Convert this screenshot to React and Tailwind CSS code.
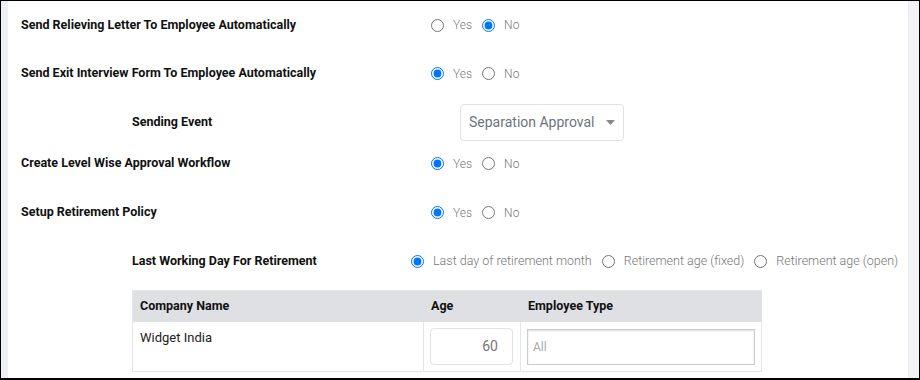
import React from 'react';

const font = { fontFamily: 'Roboto, "Liberation Sans", sans-serif' };

const Radio = ({ checked, label, className = '', size = 'text-[12px]' }) => (
    <label className={`flex items-center ${className}`}>
        <input type="radio" checked={checked} readOnly className="m-0 w-[13px] h-[13px] accent-[#0075ff]" />
        <span className={`ml-[9px] ${size} font-light text-[#777]`}>{label}</span>
    </label>
);

const YesNo = ({ yes }) => (
    <div className="flex items-center">
        <Radio checked={yes} label="Yes" />
        <Radio checked={!yes} label="No" className="ml-[10px]" />
    </div>
);

const Row = ({ label, yes, height }) => (
    <div className={`flex items-center pl-[13px] ${height}`}>
        <div className="w-[410px] text-[12.5px] font-bold text-[#111]">{label}</div>
        <YesNo yes={yes} />
    </div>
);

export default function App() {
    return (
        <div className="w-[920px] h-[380px] flex border-t border-l border-r border-b-2 border-black bg-white overflow-hidden" style={font}>
            <div className="w-[7px] bg-[#eef0f4]" />
            <div className="flex-1 flex flex-col border-r border-[#e9ebef]">
                <Row label="Send Relieving Letter To Employee Automatically" yes={false} height="h-[48px]" />
                <Row label="Send Exit Interview Form To Employee Automatically" yes={true} height="h-[49px]" />

                {/* sending event */}
                <div className="flex items-center pl-[124px] h-[49px]">
                    <div className="w-[328px] text-[12.5px] font-bold text-[#111]">Sending Event</div>
                    <div className="w-[164px] h-[37px] border border-[#dfe2e6] rounded-[4px] flex items-center justify-between pl-[8px] pr-[8px]">
                        <span className="text-[14px] text-[#6c757d]">Separation Approval</span>
                        <svg width="9" height="5" viewBox="0 0 9 5"><path d="M0 0h9L4.5 5z" fill="#888" /></svg>
                    </div>
                </div>

                <Row label="Create Level Wise Approval Workflow" yes={true} height="h-[33px]" />
                <Row label="Setup Retirement Policy" yes={true} height="h-[65px]" />

                {/* last working day */}
                <div className="flex items-center pl-[124px] h-[33px]">
                    <div className="w-[279px] text-[12.5px] font-bold text-[#111]">Last Working Day For Retirement</div>
                    <Radio checked={true} label="Last day of retirement month" size="text-[12.5px]" />
                    <Radio checked={false} label="Retirement age (fixed)" size="text-[12.5px]" className="ml-[10px]" />
                    <Radio checked={false} label="Retirement age (open)" size="text-[12.5px]" className="ml-[10px]" />
                </div>

                <div className="ml-[124px] mt-[12px] w-[630px] border border-[#e3e5e8]">
                    <div className="flex h-[31px] items-center bg-[#dee0e3] text-[12.5px] font-bold text-[#111]">
                        <div className="w-[291px] pl-[7px]">Company Name</div>
                        <div className="w-[97px] pl-[7px]">Age</div>
                        <div className="flex-1 pl-[7px]">Employee Type</div>
                    </div>
                    <div className="flex h-[49px]">
                        <div className="w-[291px] pl-[7px] pt-[6px] text-[13px] text-[#222] border-r border-[#e3e5e8]">Widget India</div>
                        <div className="w-[97px] pl-[6px] pt-[6px] border-r border-[#e3e5e8]">
                            <div className="w-[83px] h-[37px] border border-[#dfe2e6] rounded-[4px] flex items-center justify-end pr-[14px] text-[14px] text-[#777]">60</div>
                        </div>
                        <div className="flex-1 pl-[6px] pr-[6px] pt-[7px]">
                            <div className="h-[36px] border border-[#c9ccd1] shadow-[inset_0_1px_2px_#ddd] flex items-center pl-[5px] text-[12px] text-[#aaa]">All</div>
                        </div>
                    </div>
                </div>
            </div>
            <div className="w-[10px] bg-[#f1f3f7]" />
        </div>
    );
}
